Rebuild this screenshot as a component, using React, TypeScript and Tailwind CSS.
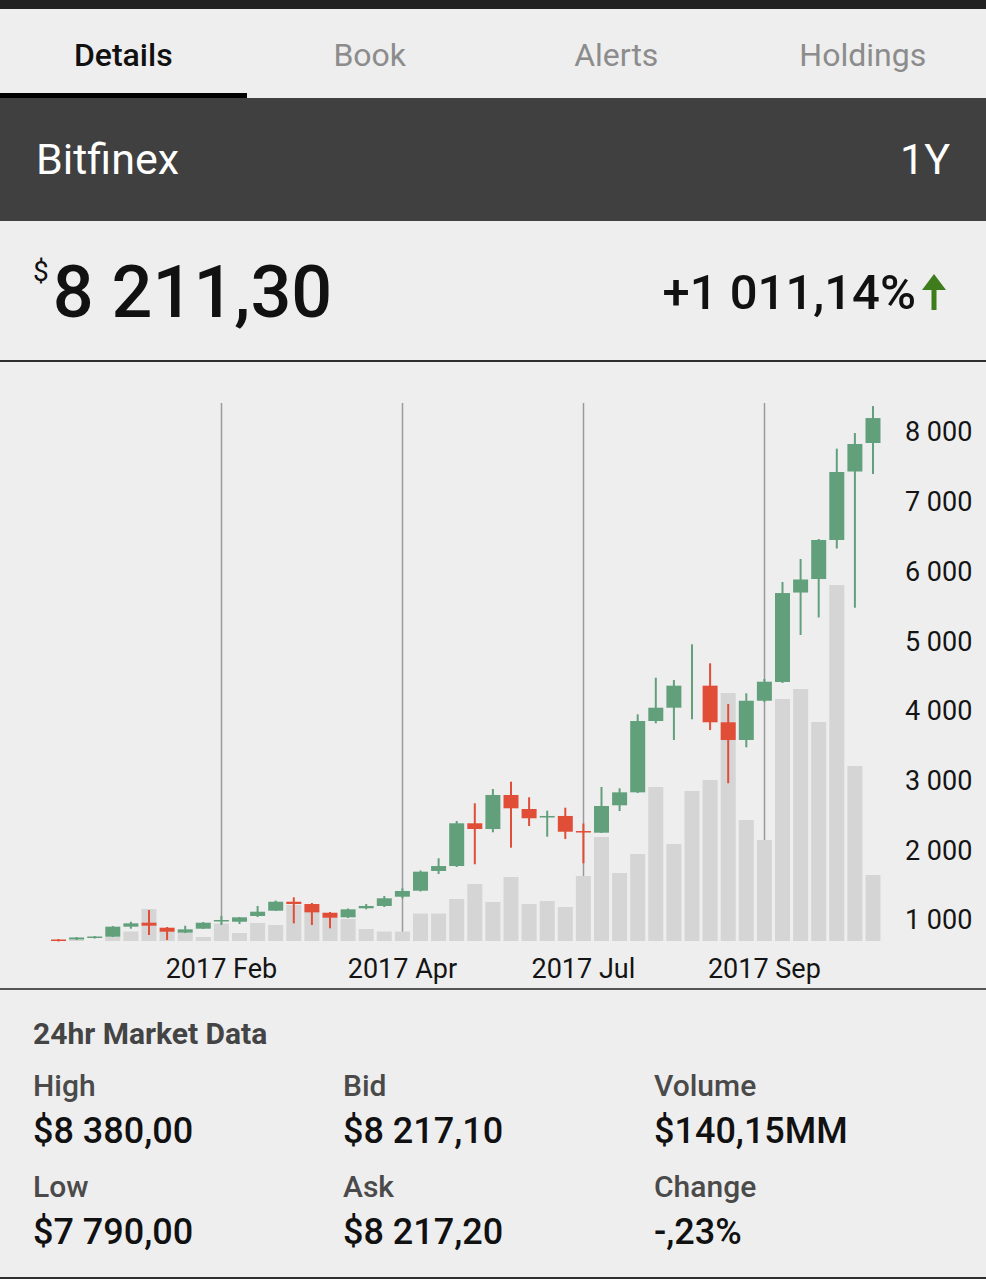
const tabs = ["Details", "Book", "Alerts", "Holdings"];

// open, close, high, low, volume (weekly)
const candles: [number, number, number, number, number][] = [
  [720, 700, 727, 692, 1],
  [720, 749, 756, 713, 1],
  [742, 763, 770, 734, 0],
  [760, 904, 914, 756, 4],
  [904, 952, 975, 875, 9.5],
  [961, 918, 1143, 785, 32],
  [889, 832, 899, 713, 10],
  [818, 866, 918, 813, 8],
  [875, 961, 971, 871, 4],
  [985, 1000, 1058, 928, 17.5],
  [975, 1038, 1043, 942, 8],
  [1057, 1119, 1201, 1043, 18],
  [1133, 1262, 1279, 1129, 16],
  [1262, 1229, 1325, 952, 36],
  [1229, 1110, 1244, 928, 31],
  [1104, 1033, 1115, 881, 24],
  [1038, 1153, 1165, 1028, 22],
  [1168, 1201, 1229, 1153, 12],
  [1201, 1311, 1344, 1186, 9.5],
  [1334, 1416, 1454, 1311, 9.5],
  [1420, 1693, 1710, 1409, 27.5],
  [1703, 1774, 1885, 1660, 27.5],
  [1774, 2387, 2420, 1760, 42],
  [2387, 2305, 2674, 1799, 57],
  [2305, 2793, 2879, 2258, 39],
  [2793, 2602, 2984, 2037, 64],
  [2592, 2459, 2760, 2348, 37],
  [2470, 2492, 2568, 2195, 40],
  [2492, 2266, 2611, 2162, 34],
  [2276, 2255, 2384, 1813, 65],
  [2252, 2635, 2908, 2248, 104],
  [2645, 2831, 2889, 2563, 68],
  [2831, 3854, 3950, 2821, 87],
  [3854, 4045, 4475, 3821, 154],
  [4045, 4361, 4442, 3582, 97],
  [4100, 4100, 4954, 3879, 150],
  [4361, 3836, 4682, 3725, 161],
  [3836, 3582, 4098, 2961, 248],
  [3582, 4145, 4252, 3477, 121],
  [4145, 4418, 4457, 4127, 101],
  [4414, 5690, 5848, 4400, 242],
  [5697, 5884, 6178, 5088, 252],
  [5891, 6451, 6465, 5339, 219],
  [6451, 7426, 7761, 6329, 356],
  [7433, 7828, 7985, 5479, 175],
  [7842, 8200, 8372, 7397, 66],
];

const priceTicks = [8000, 7000, 6000, 5000, 4000, 3000, 2000, 1000];
const months = [
  { label: "2017 Feb", i: 9 },
  { label: "2017 Apr", i: 19 },
  { label: "2017 Jul", i: 29 },
  { label: "2017 Sep", i: 39 },
];

const GREEN = "#62a07c";
const RED = "#e04e38";
const BASE = 941;

const py = (p: number) => 989.7 - p * 0.069714;
const cx = (i: number) => 58.5 + i * 18.1;

function fmt(n: number) {
  return n.toLocaleString("en-US").replace(",", " ");
}

function Chart() {
  return (
    <svg width={986} height={626} viewBox="0 362 986 626" className="block">
      {months.map((m) => (
        <line key={m.label} x1={Math.round(cx(m.i)) + 0.5} x2={Math.round(cx(m.i)) + 0.5} y1={403} y2={BASE} stroke="#9a9a9a" strokeWidth={1.5} />
      ))}
      {candles.map(([, , , , v], i) =>
        v > 0 ? <rect key={"v" + i} x={cx(i) - 7.5} y={BASE - v} width={15} height={v} fill="#d5d5d5" /> : null
      )}
      {candles.map(([o, c, h, l], i) => {
        const color = c >= o ? GREEN : RED;
        const top = py(Math.max(o, c));
        const bot = py(Math.min(o, c));
        return (
          <g key={"c" + i} fill={color}>
            <rect x={cx(i) - 1} y={py(h)} width={2} height={py(l) - py(h)} />
            <rect x={cx(i) - 7.5} y={top} width={15} height={Math.max(bot - top, o === c ? 0 : 1.5)} />
          </g>
        );
      })}
      {priceTicks.map((t) => (
        <text key={t} x={905} y={py(t) + 9.5} fontSize={27} fill="#141414" fontFamily="Roboto, sans-serif">
          {fmt(t)}
        </text>
      ))}
      {months.map((m) => (
        <text key={m.label} x={cx(m.i)} y={977.5} fontSize={27} fill="#141414" textAnchor="middle" fontFamily="Roboto, sans-serif">
          {m.label}
        </text>
      ))}
    </svg>
  );
}

function Stat({ label, value }: { label: string; value: string }) {
  return (
    <div>
      <div className="text-[30px] leading-[34px] font-medium text-[#4a4a4a]">{label}</div>
      <div className="mt-[8px] text-[36px] leading-[40px] font-medium text-[#111]">{value}</div>
    </div>
  );
}

export default function App() {
  return (
    <div className="w-[986px] h-[1280px] bg-white font-['Roboto',sans-serif] overflow-hidden">
      <div className="h-[9px] bg-[#212121]" />

      <nav className="flex h-[89px] bg-[#eeeeee]">
        {tabs.map((t, i) => (
          <div
            key={t}
            className={
              i === 0
                ? "flex-1 flex items-center justify-center pt-[8px] border-b-[5px] border-black text-[32px] font-medium text-[#111]"
                : "flex-1 flex items-center justify-center pt-[3px] text-[32px] text-[#8c8c8c]"
            }
          >
            {t}
          </div>
        ))}
      </nav>

      <header className="h-[123px] bg-[#404040] flex items-center justify-between pl-[36px] pr-[36px] text-white text-[43px]">
        <span>Bitfinex</span>
        <span>1Y</span>
      </header>

      <section className="h-[141px] bg-[#eeeeee] border-b-2 border-[#2e2e2e] flex items-center justify-between pl-[33px] pr-[40px]">
        <div className="flex items-start gap-[4px]">
          <span className="text-[28px] leading-none mt-[1px] text-[#111]">$</span>
          <span className="text-[72px] leading-none font-medium text-[#111] -mb-[4px]">8 211,30</span>
        </div>
        <div className="flex items-center gap-[6px] mt-[3px]">
          <span className="text-[49px] leading-none font-medium text-[#111]">+1 011,14%</span>
          <svg width="24" height="36" viewBox="0 0 24 36">
            <polygon points="12,0 24,16 0,16" fill="#3f7d1c" />
            <rect x="9.5" y="14" width="5" height="22" fill="#3f7d1c" />
          </svg>
        </div>
      </section>

      <section className="h-[628px] bg-[#eeeeee] border-b-2 border-[#555]">
        <Chart />
      </section>

      <section className="h-[289px] bg-[#eeeeee] border-b-2 border-[#2e2e2e] pl-[33px] pt-[27px]">
        <div className="text-[30px] leading-[34px] font-bold text-[#444]">24hr Market Data</div>
        <div className="grid grid-cols-[310px_311px_1fr] gap-y-[19px] mt-[18px]">
          <Stat label="High" value="$8 380,00" />
          <Stat label="Bid" value="$8 217,10" />
          <Stat label="Volume" value="$140,15MM" />
          <Stat label="Low" value="$7 790,00" />
          <Stat label="Ask" value="$8 217,20" />
          <Stat label="Change" value="-,23%" />
        </div>
      </section>
    </div>
  );
}
